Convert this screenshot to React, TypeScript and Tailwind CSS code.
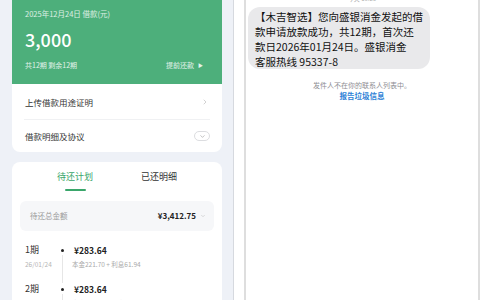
import { ChevronRight, ChevronDown } from "lucide-react";

const Row = ({ label, last }: { label: string; last?: boolean }) => (
  <div
    className={`flex items-center justify-between pl-px ${
      last ? "h-[32px]" : "h-[36px] border-b border-[#f0f1f3]"
    }`}
  >
    <span className="text-[8.5px] leading-[12px] text-[#333]">{label}</span>
    {last ? (
      <span className="flex h-[10px] w-[16px] items-center justify-center rounded-full border border-[#dcdde0]">
        <ChevronDown className="size-[7px] text-[#999]" strokeWidth={2} />
      </span>
    ) : (
      <ChevronRight className="mr-[1px] size-[8px] text-[#bbb]" strokeWidth={2} />
    )}
  </div>
);

const Installment = ({ n, date }: { n: number; date: string }) => (
  <div className="flex h-[39px] pl-[13px]">
    <div className="w-[33px]">
      <div className="text-[9px] leading-[12px] text-[#333]">{n}期</div>
      <div className="mt-[2px] text-[6.5px] leading-[12px] text-[#b5b5b5]">{date}</div>
    </div>
    <div className="flex w-[9px] flex-col items-center">
      <div className="mt-[5px] size-[3px] rounded-full bg-[#222]" />
      <div className="mt-[3px] w-px flex-1 bg-[#e6e6e6]" />
    </div>
    <div className="ml-[5px]">
      <div className="ml-[2px] text-[8.5px] font-bold leading-[12px] text-[#222]">¥283.64</div>
      <div className="mt-[2px] text-[6.5px] leading-[12px] text-[#aaa]">
        本金221.70 + 利息61.94
      </div>
    </div>
  </div>
);

const LoanPanel = () => (
  <div className="h-[300px] w-[234px] shrink-0 overflow-hidden border-r border-[#d6d9df] bg-[#eef1f7] pl-3 pr-[11px]">
    <div className="overflow-hidden rounded-b-[8px] bg-white">
      <div className="h-[84px] bg-[#4daf7b] px-[13px] pt-[8px] text-white">
        <div className="text-[7.5px] leading-[12px] text-white/80">2025年12月24日 借款(元)</div>
        <div className="mt-[8px] text-[18px] font-medium leading-[22px]">3,000</div>
        <div className="mt-[9px] flex items-center justify-between text-[7px] leading-[12px] text-white/85">
          <span>共12期 剩余12期</span>
          <span className="flex items-center gap-[4px] pr-[6px]">
            提前还款<span className="text-[5px]">▶</span>
          </span>
        </div>
      </div>
      <div className="mx-3">
        <Row label="上传借款用途证明" />
        <Row label="借款明细及协议" last />
      </div>
    </div>

    <div className="mt-[10px] rounded-[8px] bg-white pt-[9px]">
      <div className="grid grid-cols-2 px-[21px] text-center text-[9px] leading-[12px]">
        <div className="flex flex-col items-center">
          <span className="text-[#3aa66b]">待还计划</span>
          <span className="mt-[6px] h-[2px] w-[21px] rounded-full bg-[#3aa66b]" />
        </div>
        <span className="text-[#333]">已还明细</span>
      </div>
      <div className="mx-2 mt-[10px] flex h-[30px] items-center justify-between rounded-[6px] bg-[#f6f7f9] pl-[10px] pr-[8px]">
        <span className="text-[7.5px] text-[#9a9a9a]">待还总金额</span>
        <span className="flex items-center gap-[4px]">
          <span className="text-[8px] font-bold text-[#222]">¥3,412.75</span>
          <ChevronDown className="size-[6px] text-[#bbb]" strokeWidth={2} />
        </span>
      </div>
      <div className="pt-[13px]">
        <Installment n={1} date="26/01/24" />
        <Installment n={2} date="26/02/24" />
      </div>
    </div>
  </div>
);

const MessagePanel = () => (
  <div className="ml-[10px] h-[300px] w-[236px] shrink-0 border-x-2 border-[#dedede] bg-white">
    <div className="-mt-[5px] text-center text-[6px] leading-[8px] text-[#b0b0b0]">今天 10:26</div>
    <div className="ml-[2px] mt-[4px] w-[182px] rounded-[12px] bg-[#e9e9eb] px-[7px] pt-[2px] text-[10.5px] leading-[15px] text-[#111]">
      【木吉智选】您向盛银消金发起的借
      <br />
      款申请放款成功，共12期，首次还
      <br />
      款日2026年01月24日。盛银消金
      <br />
      客服热线 95337-8
    </div>
    <div className="mt-[11px] text-center text-[7px] leading-[10px] text-[#8e8e93]">
      发件人不在你的联系人列表中。
    </div>
    <div className="mt-px text-center text-[7.5px] font-semibold leading-[10px] text-[#2d7fd6]">
      报告垃圾信息
    </div>
  </div>
);

export default function App() {
  return (
    <div className="flex h-[300px] w-[480px] overflow-hidden bg-white font-['Noto_Sans_CJK_SC',sans-serif]">
      <LoanPanel />
      <MessagePanel />
    </div>
  );
}
